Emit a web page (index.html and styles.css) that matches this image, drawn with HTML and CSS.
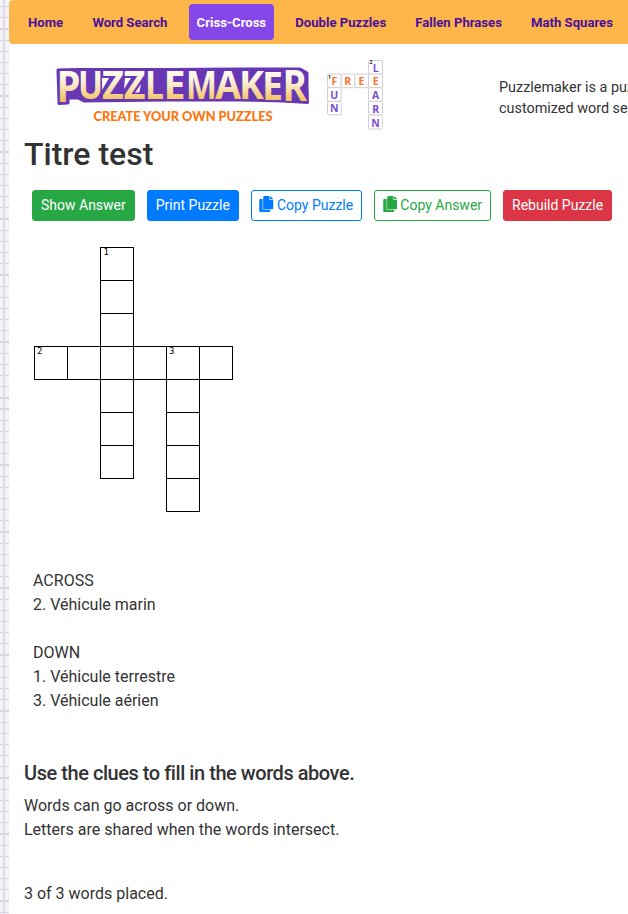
FILE: index.html
```html
<!DOCTYPE html>
<html lang="en">
<head>
<meta charset="utf-8">
<title>Puzzlemaker</title>
<link rel="stylesheet" href="styles.css">
</head>
<body>
<div class="page">
  <nav class="nav">
    <a class="nav-link">Home</a>
    <a class="nav-link">Word Search</a>
    <a class="nav-link active">Criss-Cross</a>
    <a class="nav-link">Double Puzzles</a>
    <a class="nav-link">Fallen Phrases</a>
    <a class="nav-link">Math Squares</a>
  </nav>
  <header class="banner">
    <svg class="logo" width="340" height="76" viewBox="50 56 340 76">
      <defs>
        <linearGradient id="gold" gradientUnits="userSpaceOnUse" x1="0" y1="70" x2="0" y2="101">
          <stop offset="0" stop-color="#fffdf6"/>
          <stop offset=".45" stop-color="#faeccd"/>
          <stop offset="1" stop-color="#f3c05a"/>
        </linearGradient>
      </defs>
      <path class="backing" d="M58 70L78 69.500L165 69.500L240 69L300 69L307 73V86L307.500 102.500L284 101L240 100L165 100L84 101L78 98L68 98V103L59 103.500Z"/>
      <path class="gap" d="M102 78H109L102 90ZM124 89L131 78H125ZM141 84L134 94H139Z"/>
      <g class="wordmark">
        <text x="56.500" y="102" textLength="24" lengthAdjust="spacingAndGlyphs" class="big">P</text>
        <text x="78" y="99" textLength="25" lengthAdjust="spacingAndGlyphs">U</text>
        <text x="102" y="99" textLength="22" lengthAdjust="spacingAndGlyphs">Z</text>
        <text x="123.500" y="99" textLength="22" lengthAdjust="spacingAndGlyphs">Z</text>
        <text x="145" y="98.500" textLength="19" lengthAdjust="spacingAndGlyphs">L</text>
        <text x="163.500" y="98.500" textLength="22" lengthAdjust="spacingAndGlyphs">E</text>
        <text x="186" y="98.500" textLength="31" lengthAdjust="spacingAndGlyphs">M</text>
        <text x="215" y="98.500" textLength="26" lengthAdjust="spacingAndGlyphs">A</text>
        <text x="239" y="99" textLength="25" lengthAdjust="spacingAndGlyphs">K</text>
        <text x="262" y="99.500" textLength="21" lengthAdjust="spacingAndGlyphs">E</text>
        <text x="282.500" y="101" textLength="24.500" lengthAdjust="spacingAndGlyphs" class="big">R</text>
      </g>
      <text class="tagline" x="93.500" y="121" textLength="179" lengthAdjust="spacingAndGlyphs">CREATE YOUR OWN PUZZLES</text>
      <g class="tiles">
        <rect x="368.500" y="60.500" width="14" height="14" rx="1.500"/>
        <rect x="327.500" y="74" width="13.700" height="13.700" rx="1.500"/>
        <rect x="341.200" y="74" width="13.700" height="13.700" rx="1.500"/>
        <rect x="354.900" y="74" width="13.700" height="13.700" rx="1.500"/>
        <rect x="368.500" y="74" width="14" height="13.700" rx="1.500"/>
        <rect x="327.500" y="87.700" width="13.700" height="13.700" rx="1.500"/>
        <rect x="327.500" y="101.400" width="13.700" height="13.400" rx="1.500"/>
        <rect x="368.500" y="87.700" width="14" height="13.700" rx="1.500"/>
        <rect x="368.500" y="101.400" width="14" height="13.700" rx="1.500"/>
        <rect x="368.500" y="115.100" width="14" height="14" rx="1.500"/>
      </g>
      <g class="tile-text">
        <text x="375.600" y="72">L</text>
        <text x="334.300" y="85" class="orange">F</text>
        <text x="347.800" y="85" class="orange">R</text>
        <text x="361.500" y="85" class="orange">E</text>
        <text x="375.600" y="85" class="orange">E</text>
        <text x="334.300" y="98.500">U</text>
        <text x="334.300" y="112">N</text>
        <text x="375.600" y="99">A</text>
        <text x="375.600" y="113">R</text>
        <text x="375.600" y="126.500">N</text>
        <text x="329.500" y="78.500" class="tiny">1</text>
        <text x="371" y="64" class="tiny">2</text>
      </g>
    </svg>
    <p class="intro">Puzzlemaker is a puzzle generation tool<br>customized word search, criss-cross</p>
  </header>
  <main class="content">
    <h1 class="title">Titre test</h1>
    <div class="buttons">
      <button class="btn success">Show Answer</button>
      <button class="btn primary">Print Puzzle</button>
      <button class="btn outline-primary"><svg class="copy" viewBox="0 0 14 16"><path opacity=".6" d="M2 3H5V14H2Z"/><path d="M0 4Q0 3 1 3H2.700V13.700H11V15Q11 16 10 16H1Q0 16 0 15Z"/><path d="M5 0H10.200V3.700H14V12.500Q14 13.200 13 13.200H5Q4 13.200 4 12.500V1Q4 0 5 0ZM10.800 0L14 3.100H10.800Z"/></svg>Copy Puzzle</button>
      <button class="btn outline-success"><svg class="copy" viewBox="0 0 14 16"><path opacity=".6" d="M2 3H5V14H2Z"/><path d="M0 4Q0 3 1 3H2.700V13.700H11V15Q11 16 10 16H1Q0 16 0 15Z"/><path d="M5 0H10.200V3.700H14V12.500Q14 13.200 13 13.200H5Q4 13.200 4 12.500V1Q4 0 5 0ZM10.800 0L14 3.100H10.800Z"/></svg>Copy Answer</button>
      <button class="btn danger">Rebuild Puzzle</button>
    </div>
    <svg class="puzzle" width="199" height="265" viewBox="0 0 199 265" shape-rendering="crispEdges">
      <path class="grid" d="M66.500 .5H99.500V231.500H66.500ZM66.500 33.500H99.500M66.500 66.500H99.500M.5 99.500H198.500V132.500H.5ZM33.500 99.500V132.500M132.500 99.500V264.500H165.500V99.500M66.500 165.500H99.500M66.500 198.500H99.500M132.500 165.500H165.500M132.500 198.500H165.500M132.500 231.500H165.500"/>
      <text x="69.500" y="8">1</text>
      <text x="3" y="107">2</text>
      <text x="135" y="107">3</text>
    </svg>
    <div class="clues">
      <p>ACROSS<br>2. Véhicule marin</p>
      <p>DOWN<br>1. Véhicule terrestre<br>3. Véhicule aérien</p>
    </div>
    <h2 class="subtitle">Use the clues to fill in the words above.</h2>
    <p class="help">Words can go across or down.<br>Letters are shared when the words intersect.</p>
    <p class="placed">3 of 3 words placed.</p>
  </main>
</div>
</body>
</html>
```
FILE: styles.css
```css
* { box-sizing: border-box; }
html, body { height: 914px; overflow: hidden; }
body {
  margin: 0;
  padding-left: 9px;
  font: 16px/24px Roboto, "Liberation Sans", sans-serif;
  color: #333;
  background-color: #f3f2f7;
  background-image:
    linear-gradient(90deg, transparent 3px, #dcd8e6 3px, #e0dde9 5px, transparent 5px),
    repeating-linear-gradient(180deg, transparent 0 6px, #d9d2df 6px 7.200px, transparent 7.200px 11.180px);
  background-size: 9px 100%, 9px 100%;
}
p, h1, h2 { margin: 0; }
.page { width: 619px; height: 914px; background: #fff; overflow: hidden; }
.nav {
  display: flex;
  align-items: center;
  gap: 14px;
  width: 700px;
  height: 44px;
  padding-left: 11.500px;
  border-radius: 4px;
  background: #fdb649;
}
.nav-link {
  height: 36px;
  padding: 0 7.600px;
  border-radius: 4px;
  font-size: 13.120px;
  font-weight: 700;
  line-height: 37px;
  white-space: nowrap;
  color: #4b0f9b;
}
.nav-link.active { color: #fff; background: #8547e8; }
.banner { display: flex; height: 88px; padding: 12px 0 0 41px; }
.logo { flex: none; }
.backing { fill: #6837b5; stroke: #6837b5; stroke-width: 3px; stroke-linejoin: round; }
.gap { fill: #fff; }
.wordmark text {
  font: 700 39px "Open Sans", sans-serif;
  fill: url(#gold);
  stroke: #6837b5;
  stroke-width: 3px;
  stroke-linejoin: round;
  paint-order: stroke;
}
.wordmark .big { font-size: 43px; }
.tagline { font: 900 13.500px Lato, sans-serif; fill: #ff750b; }
.tiles rect { fill: #fff; stroke: #cfcfcf; stroke-width: 1px; }
.tile-text text { font: 700 10.500px "Open Sans", sans-serif; text-anchor: middle; fill: #7850cf; }
.tile-text .orange { fill: #f9732b; }
.tile-text .tiny { font-size: 5px; fill: #222; }
.intro { margin: 20.500px 0 0 109px; font-size: 14.400px; line-height: 21px; white-space: nowrap; }
.content { padding-left: 15px; }
.title { font-size: 32px; line-height: 38px; font-weight: 500; padding-top: 3px; }
.buttons { display: flex; gap: 12px; margin: 17px 0 0 8px; }
.btn {
  height: 31px;
  padding: 0 8px;
  border: 1px solid currentColor;
  border-radius: 3px;
  font: 14px/29px Roboto, sans-serif;
  white-space: nowrap;
  background: #fff;
}
.success { background: #28a745; border-color: #28a745; color: #fff; }
.primary { background: #007bff; border-color: #007bff; color: #fff; }
.danger { background: #dc3545; border-color: #dc3545; color: #fff; }
.outline-primary { color: #007bff; }
.outline-success { color: #28a745; }
.copy { width: 14.500px; height: 16px; margin: 0 3.300px 0 -.700px; vertical-align: -2px; fill: currentColor; }
.puzzle { display: block; margin: 26px 0 0 10px; }
.grid { fill: none; stroke: #000; }
.puzzle text { font: 9px "DejaVu Sans Mono", monospace; fill: #000; }
.clues { margin: 57px 0 0 9px; }
.clues p + p { margin-top: 24px; }
.subtitle { margin-top: 48px; font-size: 20px; line-height: 24px; font-weight: 500; letter-spacing: -.450px; }
.help { margin-top: 9px; }
.placed { margin-top: 40px; }
```
